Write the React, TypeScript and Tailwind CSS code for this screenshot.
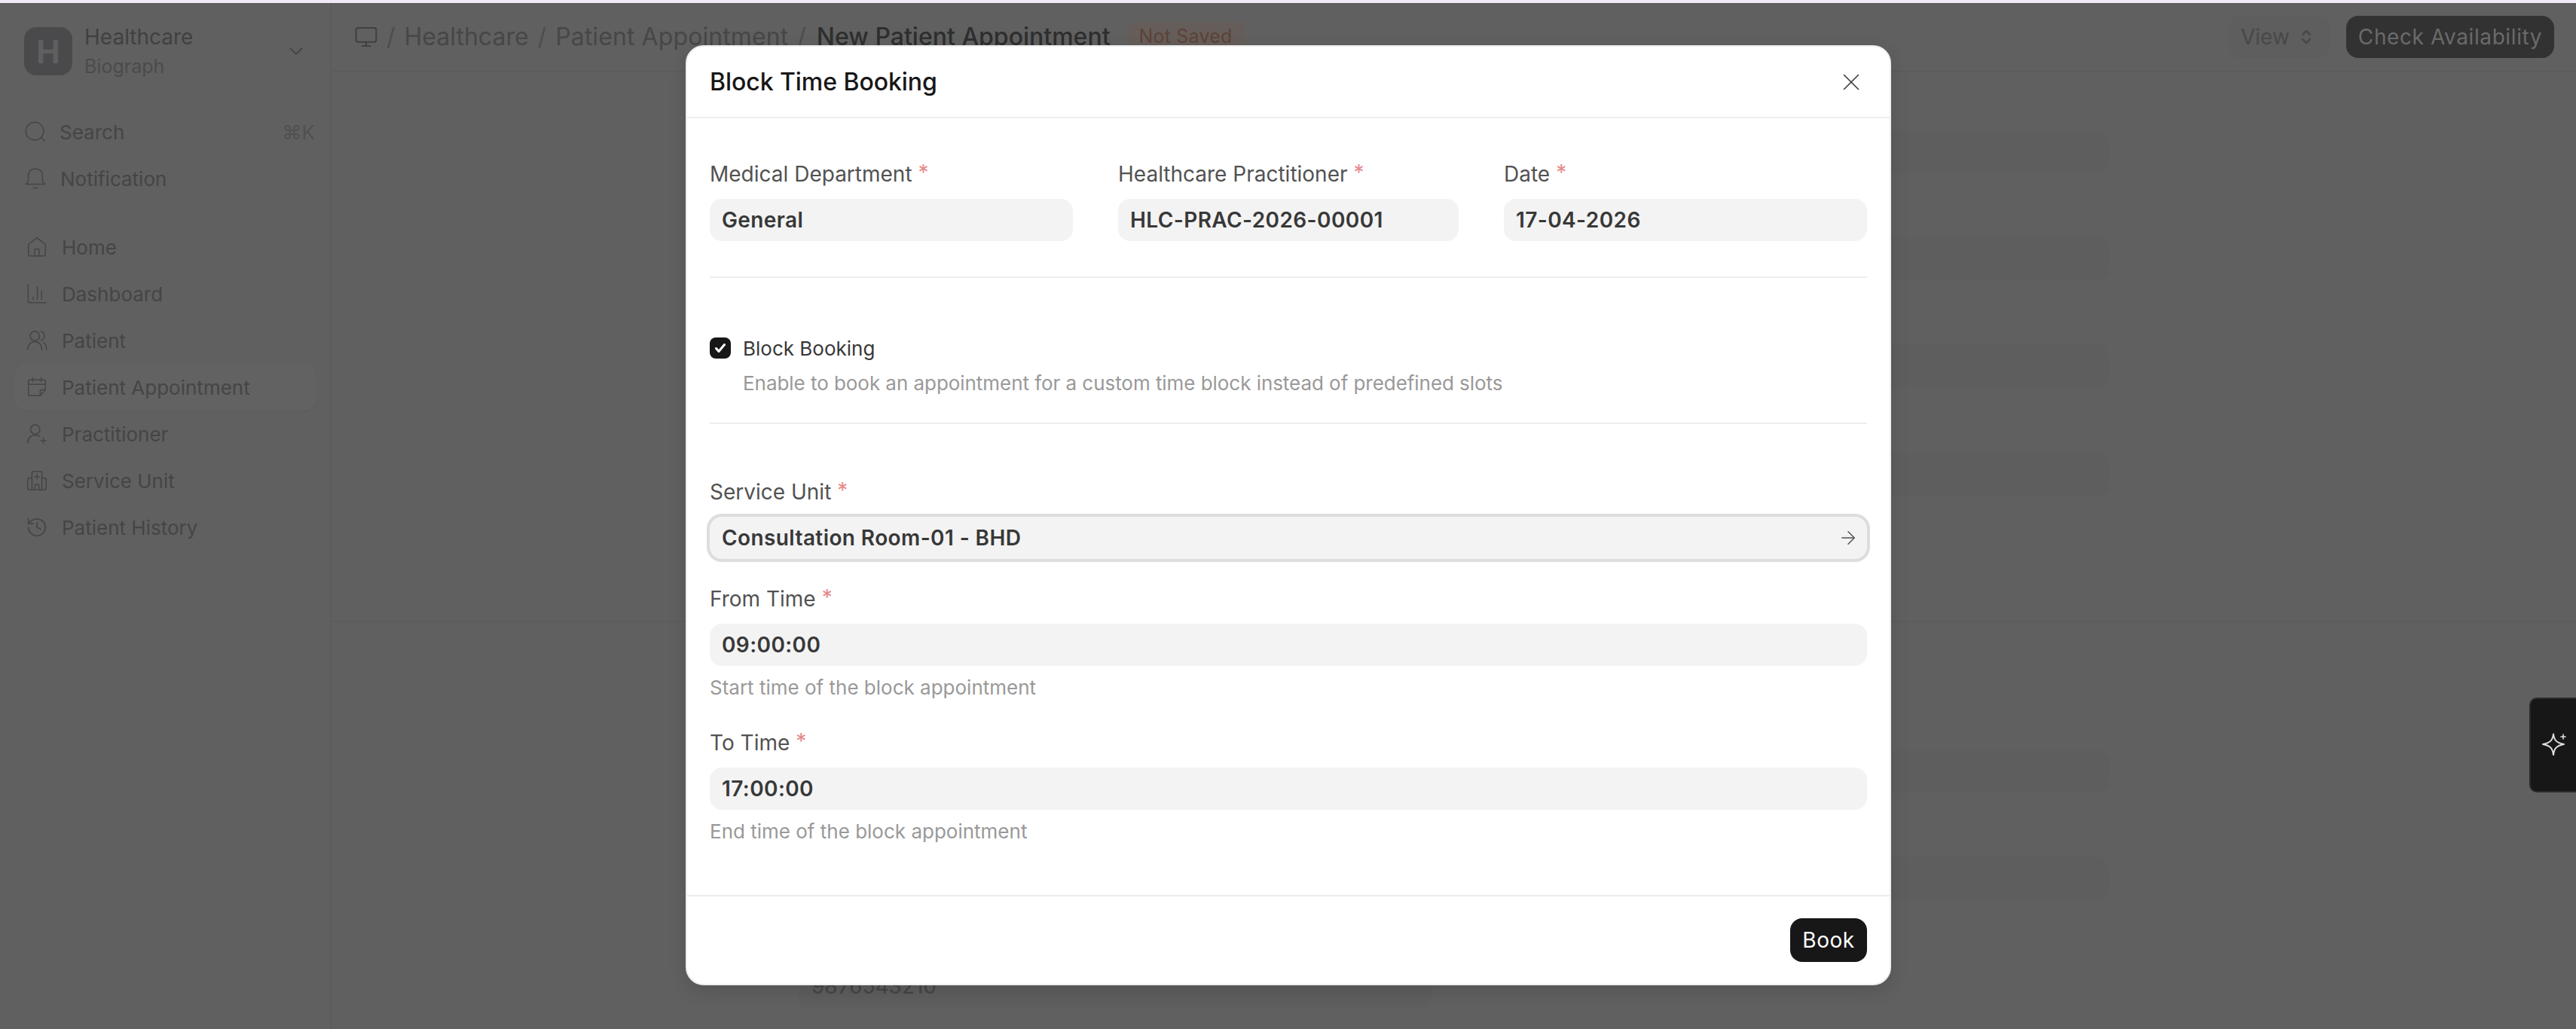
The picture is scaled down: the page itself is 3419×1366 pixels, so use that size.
import { ArrowRight, ChevronDown, ChevronsUpDown, History, Monitor, X } from "lucide-react";
import type { ReactNode } from "react";

const font = "font-['Inter',sans-serif]";

function Star() {
  return <span className="text-[#e58a8a] ml-[8px] relative top-[-2px]">*</span>;
}

function Field({ label, value, w, hint, focused }: { label: string; value: string; w?: string; hint?: string; focused?: boolean }) {
  return (
    <div className={w ?? "w-full"}>
      <div className="h-[34px] leading-[34px] text-[28px] text-[#525252]">{label}<Star /></div>
      <div className={`mt-[16px] h-[56px] rounded-[16px] bg-[#f3f3f3] flex items-center justify-between px-[16px] ${focused ? "ring-4 ring-[#dddddd]" : ""}`}>
        <span className="text-[28px] font-semibold text-[#383838] tracking-[0.4px]">{value}</span>
        {focused && <ArrowRight size={28} strokeWidth={1.25} className="text-[#525252] mr-[-5px]" />}
      </div>
      {hint && <div className="mt-[12px] h-[34px] leading-[34px] text-[26px] text-[#999999]">{hint}</div>}
    </div>
  );
}

function Ico({ children }: { children: ReactNode }) {
  return (
    <svg width="30" height="30" viewBox="0 0 16 16" fill="none" stroke="currentColor" strokeWidth="0.8" strokeLinecap="round" strokeLinejoin="round" className="shrink-0">
      {children}
    </svg>
  );
}

const nav: { label: string; icon: ReactNode; active?: boolean }[] = [
  {
    label: "Home",
    icon: (
      <Ico>
        <path d="M2 13.2V6.600q0-.6.5-1L8 1.400l5.500 4.200q.5.400.5 1v6.600q0 1-1 1H3q-1 0-1-1z" />
        <path d="M6.400 14.200V9.800q0-.5.5-.5h2.200q.5 0 .5.500v4.400" />
      </Ico>
    ),
  },
  {
    label: "Dashboard",
    icon: (
      <Ico>
        <path d="M1.800 1.500V13.300q0 1 1 1H14.400" />
        <path d="M5.300 10.200v1.800M8.300 3v9M11.300 5.800V12" />
      </Ico>
    ),
  },
  {
    label: "Patient",
    icon: (
      <Ico>
        <circle cx="6.500" cy="4.800" r="3.300" />
        <path d="M1.500 14.500c0-3.500 2-5.700 5-5.700s5 2.200 5 5.700" />
        <path d="M10.800 1.500c1.700.5 2.500 1.800 2.500 3.300s-.9 2.800-2.500 3.300" />
        <path d="M12.900 9.600c1.300 1 1.900 2.800 1.900 4.900" />
      </Ico>
    ),
  },
  {
    label: "Patient Appointment",
    active: true,
    icon: (
      <Ico>
        <path d="M14 9.800V3.800q0-1-1-1H3q-1 0-1 1V13q0 1 1 1h7.300z" />
        <path d="M10.300 14v-3.200q0-1 1-1H14M2 6h12M5 1.300v2.700M11 1.300v2.700" />
      </Ico>
    ),
  },
  {
    label: "Practitioner",
    icon: (
      <Ico>
        <circle cx="6.800" cy="4.800" r="3.300" />
        <path d="M1.500 14.500c0-3.500 2.200-5.700 5.300-5.700 1.300 0 2.400.4 3.200 1" />
        <path d="M12.600 10.900v3.800M10.700 12.800h3.800" />
      </Ico>
    ),
  },
  {
    label: "Service Unit",
    icon: (
      <Ico>
        <path d="M4.500 14.500V2.500q0-1 1-1h5q1 0 1 1v12" />
        <path d="M4.500 6.300H2.500q-1 0-1 1v6.200q0 1 1 1h11q1 0 1-1V7.300q0-1-1-1h-2" />
        <path d="M8 3.500v3.400M6.300 5.200h3.400" />
        <path d="M6.600 14.500v-3q0-.8.800-.8h1.200q.8 0 .8.8v3" />
      </Ico>
    ),
  },
  { label: "Patient History", icon: <History size={30} strokeWidth={1.4} className="shrink-0" /> },
];

function BgField({ text }: { text?: string }) {
  return (
    <div className="h-[57px] rounded-[16px] bg-[#5e5e5e] flex items-center px-[17px] text-[28px] text-[#454545]">{text}</div>
  );
}

export default function App() {
  return (
    <div className={`relative w-[3419px] h-[1366px] overflow-hidden bg-[#606060] ${font}`}>
      <div className="h-[4px] bg-[#f3e8f8]" />
      <div className="flex h-[1362px]">
        {/* Sidebar */}
        <aside className="w-[440px] shrink-0 border-r-2 border-[#5c5c5c] px-[18px]">
          <div className="flex items-center h-[64px] pl-[14px] pr-[12px] mt-[32px]">
            <div className="w-[64px] h-[64px] rounded-[16px] bg-[#4a4a4c] flex items-center justify-center text-[#5f5f5f] font-bold text-[42px]">H</div>
            <div className="ml-[16px] flex-1">
              <div className="text-[28px] leading-[36px] text-[#404040]">Healthcare</div>
              <div className="text-[25px] leading-[36px] text-[#4b4b4b] mt-[3px]">Biograph</div>
            </div>
            <ChevronDown size={30} strokeWidth={1.5} className="text-[#454545]" />
          </div>
          <div className="mt-[44px]">
            <div className="flex items-center h-[62px] pl-[14px] pr-[2px] text-[26px] text-[#454545]">
              <svg width="30" height="30" viewBox="0 0 16 16" fill="none" stroke="currentColor" strokeWidth="0.8" strokeLinecap="round" className="shrink-0">
                <circle cx="7.500" cy="7.500" r="6.300" />
                <path d="M12.200 12.200l2.300 2.300" />
              </svg>
              <span className="ml-[17px] flex-1">Search</span>
              <span className="text-[26px] text-[#505050]">⌘K</span>
            </div>
            <div className="flex items-center h-[62px] pl-[14px] text-[26px] text-[#454545]">
              <svg width="30" height="30" viewBox="0 0 16 16" fill="none" stroke="currentColor" strokeWidth="0.8" strokeLinecap="round" strokeLinejoin="round" className="shrink-0">
                <path d="M1.200 12q1.600-.8 1.800-3V6q0-4.800 5-4.800T13 6v3q.2 2.200 1.800 3z" />
                <path d="M6.500 14.400q1.500 1 3 0" />
              </svg>
              <span className="ml-[18px]">Notification</span>
            </div>
          </div>
          <div className="mt-[29px]">
            {nav.map(({ label, icon, active }) => (
              <div key={label} className={`flex items-center h-[62px] pl-[16px] text-[26px] text-[#454545] rounded-[16px] ${active ? "bg-[#626262] shadow-[0_1px_2px_rgba(0,0,0,0.04)]" : ""}`}>
                {icon}
                <span className="ml-[18px]">{label}</span>
              </div>
            ))}
          </div>
        </aside>

        {/* Main */}
        <main className="flex-1 min-w-0">
          <div className="h-[92px] border-b-2 border-[#5c5c5c] flex items-center pl-[30px] pr-[29px] text-[32px] text-[#474747]">
            <Monitor size={32} strokeWidth={1.5} className="text-[#404040]" />
            <span className="ml-[11px] text-[#4d4d4d]">/</span>
            <span className="ml-[12px]">Healthcare</span>
            <span className="ml-[12px] text-[#4d4d4d]">/</span>
            <span className="ml-[12px] tracking-[0.1px]">Patient Appointment</span>
            <span className="ml-[12px] text-[#4d4d4d]">/</span>
            <span className="ml-[14px] font-medium text-[#2e2e2e]">New Patient Appointment</span>
            <span className="ml-[21px] h-[40px] w-[158px] rounded-[12px] bg-[#655d59] text-[25px] tracking-[0.2px] text-[#5e4238] flex items-center justify-center">Not Saved</span>
            <div className="ml-auto h-[56px] w-[135px] rounded-[16px] bg-[#5e5e5e] flex items-center pl-[16px] text-[#484848] text-[28px]">
              View
              <ChevronsUpDown size={24} strokeWidth={2.5} className="ml-[10px]" />
            </div>
            <div className="ml-[21px] h-[56px] w-[276px] rounded-[16px] bg-[#323232] flex items-center justify-center text-[#6a6a6a] text-[28px] tracking-[0.6px]">Check Availability</div>
          </div>
          {/* background form */}
          <div className="pl-[620px] pr-[620px] pt-[77px] flex flex-col">
            {["h-[142px]", "h-[142px]", "h-[145px]", "h-[142px]"].map((h, i) => (
              <div key={i} className={`grid grid-cols-2 gap-[60px] ${h}`}>
                <BgField />
                <BgField />
              </div>
            ))}
          </div>
          <div className="border-t-2 border-[#5c5c5c] mt-[80px] pl-[620px] pr-[620px] pt-[170px] flex flex-col">
            {[0, 1, 2].map((i) => (
              <div key={i} className="grid grid-cols-2 gap-[60px] h-[142px]">
                {i === 2 ? <BgField text="9876543210" /> : <BgField />}
                {i < 2 ? <BgField /> : <div />}
              </div>
            ))}
          </div>
        </main>
      </div>

      {/* Assistant tab */}
      <div className="absolute right-0 top-[926px] w-[62px] h-[126px] rounded-l-[10px] bg-[#171717] border-2 border-r-0 border-[#2a2a2a] flex items-center justify-center">
        <svg width="36" height="36" viewBox="-2 0 36 36" fill="none" stroke="#e0e0e0" strokeWidth="2" strokeLinejoin="round" strokeLinecap="round">
          <path d="M16 3.500c.9 7.600 3.600 11.500 14 13.500-9.600 1.700-12.900 5.400-14 14-1.100-8.600-4.300-12.300-14-14 10.400-2 13.100-5.900 14-13.500z" />
          <path d="M29 4v6M26 7h6" strokeWidth="1.600" />
        </svg>
      </div>

      {/* Modal */}
      <div className="absolute left-[910px] top-[60px] w-[1600px] h-[1248px] bg-white rounded-[24px] border-2 border-[#eeeeee] shadow-[0_8px_24px_rgba(0,0,0,0.12)] flex flex-col text-[#383838]">
        <div className="h-[95px] shrink-0 border-b-2 border-[#ededed] flex items-center justify-between pl-[30px] pr-[32px]">
          <h2 className="text-[32px] font-medium text-[#171717] tracking-[-0.05px]">Block Time Booking</h2>
          <X size={38} strokeWidth={1} className="text-[#383838]" />
        </div>
        <div className="flex-1 px-[30px] flex flex-col">
          <div className="flex gap-[60px] mt-[57px]">
            <Field label="Medical Department" value="General" w="w-[482px]" />
            <Field label="Healthcare Practitioner" value="HLC-PRAC-2026-00001" w="w-[452px]" />
            <Field label="Date" value="17-04-2026" w="w-[482px]" />
          </div>
          <div className="h-[2px] bg-[#ededed] mt-[47px]" />
          <div className="flex items-center mt-[78px] h-[30px]">
            <div className="w-[28px] h-[28px] rounded-[8px] bg-[#171717] flex items-center justify-center">
              <svg width="18" height="18" viewBox="0 0 18 18" fill="none" stroke="#ffffff" strokeWidth="3" strokeLinecap="round" strokeLinejoin="round">
                <path d="M3.500 9.500l3.500 4 7.500-9" />
              </svg>
            </div>
            <span className="ml-[16px] text-[26px] text-[#383838]">Block Booking</span>
          </div>
          <div className="ml-[44px] mt-[15px] h-[34px] leading-[34px] text-[26px] text-[#999999] tracking-[-0.05px]">Enable to book an appointment for a custom time block instead of predefined slots</div>
          <div className="h-[2px] bg-[#ededed] mt-[35px]" />
          <div className="mt-[73px] flex flex-col gap-[36px]">
            <Field label="Service Unit" value="Consultation Room-01 - BHD" focused />
            <div className="flex flex-col gap-[39px]">
              <Field label="From Time" value="09:00:00" hint="Start time of the block appointment" />
              <Field label="To Time" value="17:00:00" hint="End time of the block appointment" />
            </div>
          </div>
        </div>
        <div className="h-[118px] shrink-0 border-t-2 border-[#ededed] flex items-center justify-end pr-[30px]">
          <button className="h-[58px] w-[102px] rounded-[16px] bg-[#171717] text-white text-[28px] tracking-[0.5px]">Book</button>
        </div>
      </div>
    </div>
  );
}
